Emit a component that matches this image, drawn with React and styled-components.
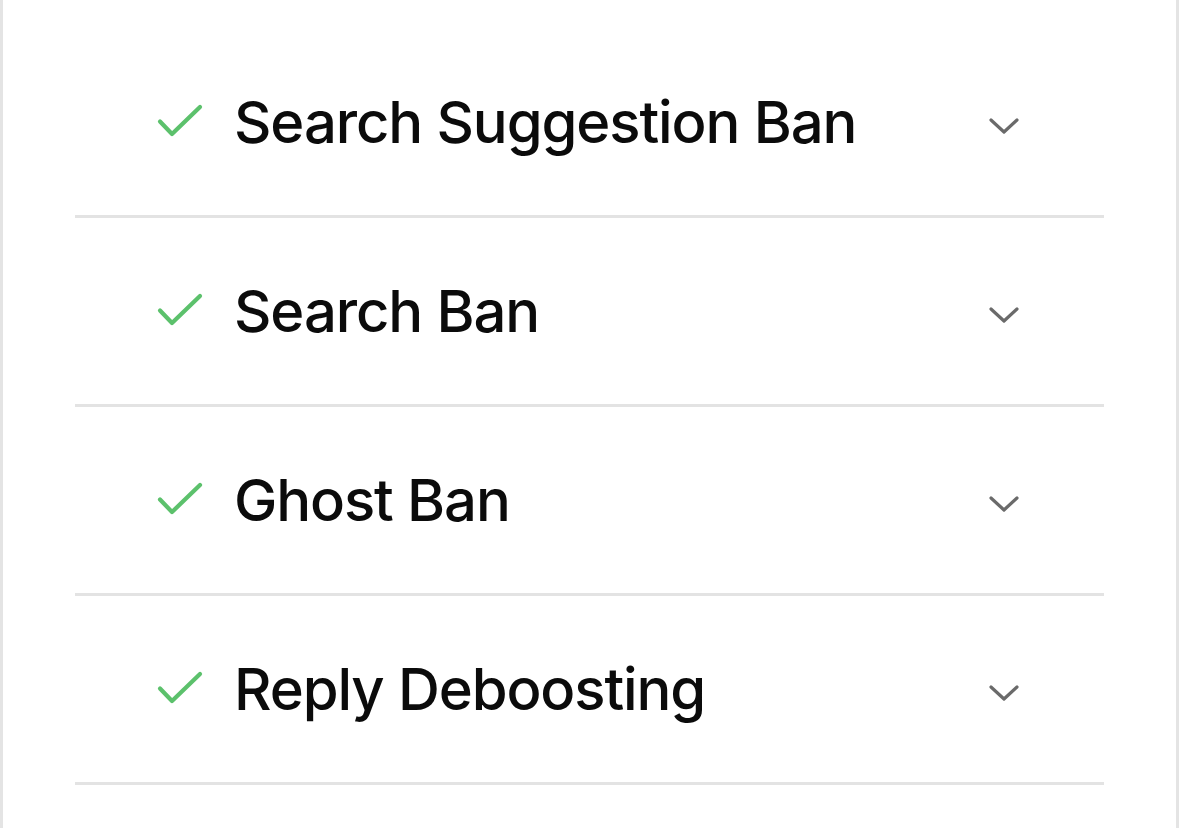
import React from 'react'
import styled, {createGlobalStyle} from 'styled-components'

const items = ['Search Suggestion Ban', 'Search Ban', 'Ghost Ban', 'Reply Deboosting']

export default function App(){
	return(
		<>
			<Global />
			<Page>
				<List>
					{items.map((label)=>(
						<Row key={label}>
							<Check viewBox="0 0 46 34">
								<path d="M3 17.5 L15 30 L43 3" />
							</Check>
							<Label>{label}</Label>
							<Chevron viewBox="0 0 30 16">
								<path d="M2 2 L15 14 L28 2" />
							</Chevron>
						</Row>
					))}
				</List>
			</Page>
		</>
	)
}

const Global = createGlobalStyle`
	html, body { margin:0; padding:0; background:#fff; }
	body { font-family: Inter, "Noto Sans", sans-serif; }
`

const Page = styled.div`
	box-sizing:border-box;
	width:1179px;
	height:828px;
	overflow:hidden;
	background:#fff;
	border-left:3px solid #e4e4e4;
	border-right:3px solid #e4e4e4;
	padding:29px 72px 0 72px;
`

const List = styled.div`
	display:flex;
	flex-direction:column;
`

const Row = styled.div`
	display:flex;
	align-items:center;
	height:186px;
	padding:0 85px 0 82px;
	border-bottom:3px solid #e3e3e3;
`

const Check = styled.svg`
	width:46px;
	height:34px;
	flex:none;
	margin-top:-2px;
	fill:none;
	stroke:#5cc16c;
	stroke-width:4.2;
	stroke-linecap:round;
	stroke-linejoin:round;
`

const Label = styled.div`
	flex:1;
	margin-left:31px;
	font-size:58px;
	font-weight:500;
	color:#0b0b0b;
	letter-spacing:-1.1px;
	white-space:nowrap;
`

const Chevron = styled.svg`
	width:30px;
	height:16px;
	flex:none;
	margin-top:7px;
	fill:none;
	stroke:#6a6a6a;
	stroke-width:3.2;
	stroke-linecap:round;
	stroke-linejoin:round;
`
